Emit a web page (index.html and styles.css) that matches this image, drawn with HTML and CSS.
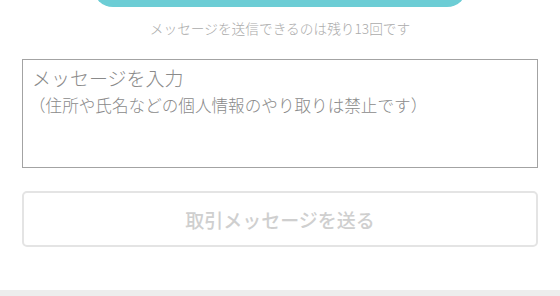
FILE: index.html
```html
<!DOCTYPE html>
<html lang="ja">
<head>
<meta charset="utf-8">
<title>取引メッセージ</title>
<link rel="stylesheet" href="styles.css">
</head>
<body>
<div class="page">
  <div class="top-clip">
    <div class="top-button"></div>
  </div>
  <p class="remaining">メッセージを送信できるのは残り13回です</p>
  <div class="message-box">
    <div class="ph-main">メッセージを入力</div>
    <div class="ph-sub">（住所や氏名などの個人情報のやり取りは禁止です）</div>
  </div>
  <div class="send-button">取引メッセージを送る</div>
  <div class="footer-band"></div>
</div>
</body>
</html>
```

FILE: styles.css
```css
html, body {
  margin: 0;
  padding: 0;
  background: #ffffff;
}

body {
  font-family: "Noto Sans CJK JP", "Noto Sans", sans-serif;
}

.page {
  width: 560px;
  height: 296px;
  display: flex;
  flex-direction: column;
  overflow: hidden;
}

.top-clip {
  height: 7px;
  overflow: hidden;
  padding: 0 93px;
}

.top-button {
  height: 40px;
  margin-top: -33px;
  border-radius: 20px;
  background: #6ccdd5;
}

.remaining {
  margin: 12px 0 0;
  font-size: 13.7px;
  line-height: 18px;
  font-weight: 300;
  color: #ababab;
  text-align: center;
}

.message-box {
  margin: 22px 22px 0;
  height: 111px;
  box-sizing: border-box;
  border: 1px solid #a3a3a3;
  padding: 6px 9px 0;
  color: #8a8a8a;
}

.ph-main {
  font-size: 19px;
  line-height: 24px;
  font-weight: 300;
}

.ph-sub {
  margin-top: 4px;
  font-size: 16.6px;
  line-height: 22px;
  font-weight: 300;
  margin-left: -3px;
}

.send-button {
  margin: 23px 22px 0;
  height: 57px;
  box-sizing: border-box;
  border: 2px solid #e4e4e4;
  border-radius: 5px;
  display: flex;
  align-items: center;
  justify-content: center;
  font-size: 19px;
  font-weight: 500;
  color: #cfcfcf;
}

.footer-band {
  margin-top: 43px;
  height: 6px;
  background: #ededed;
}
```
